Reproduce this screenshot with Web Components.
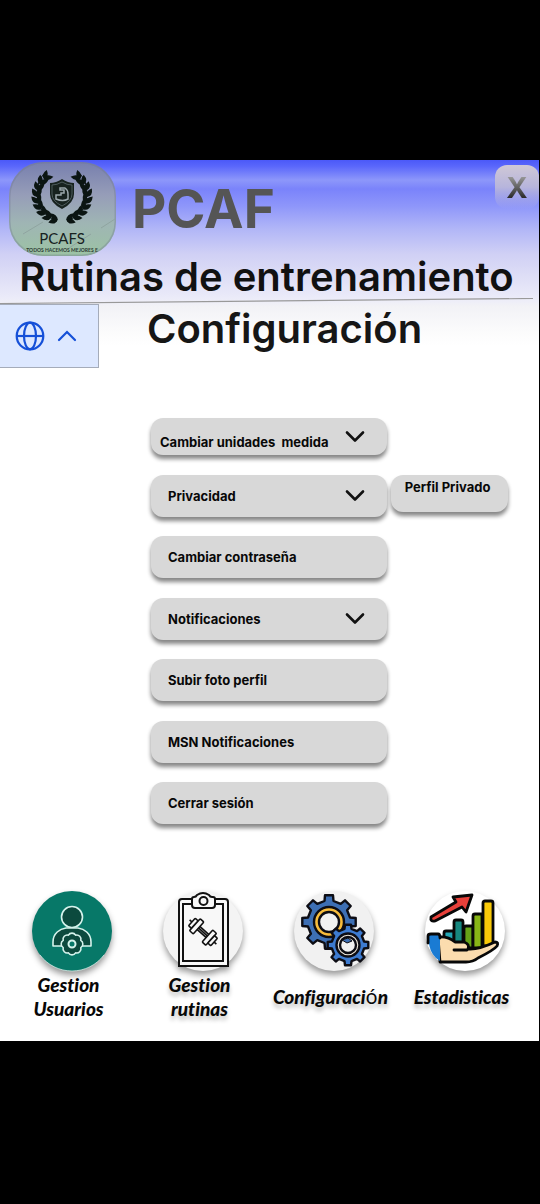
<!DOCTYPE html>
<html lang="es">
<head>
<meta charset="utf-8">
<meta name="viewport" content="width=device-width, initial-scale=1">
<title>PCAF - Configuración</title>
<style>
  body { margin: 0; background: #000; font-family: Inter, "Liberation Sans", sans-serif; }
</style>
</head>
<body>
<pcaf-screen>
  <pcaf-header slot="header">PCAF</pcaf-header>
  <settings-menu>
    <settings-row chevron compact>Cambiar unidades&nbsp; medida</settings-row>
    <settings-row chevron>Privacidad<span slot="option">Perfil Privado</span></settings-row>
    <settings-row>Cambiar contraseña</settings-row>
    <settings-row chevron>Notificaciones</settings-row>
    <settings-row>Subir foto perfil</settings-row>
    <settings-row>MSN Notificaciones</settings-row>
    <settings-row>Cerrar sesión</settings-row>
  </settings-menu>
  <bottom-nav slot="nav">
    <nav-item icon="users" flat>Gestion Usuarios</nav-item>
    <nav-item icon="clipboard">Gestion rutinas</nav-item>
    <nav-item icon="gears">Configuraci<span style="font:400 20px/20px 'Noto Sans',sans-serif">ó</span>n</nav-item>
    <nav-item icon="stats">Estadisticas</nav-item>
  </bottom-nav>
</pcaf-screen>

<script>
const define = (name, html) => customElements.define(name, class extends HTMLElement {
  constructor() {
    super();
    const t = document.createElement('template');
    t.innerHTML = typeof html === 'function' ? html(this) : html;
    this.attachShadow({ mode: 'open' }).append(t.content.cloneNode(true));
  }
});

/* Cog outline: teeth are trapezoids between the root radius r and the tip radius R. */
function cog(cx, cy, R, r, n, turn = 0) {
  const pts = [];
  for (let i = 0; i < n; i++) {
    for (const [f, rad] of [[-.27, r], [-.19, R], [.19, R], [.27, r]]) {
      const a = (i + f) * 2 * Math.PI / n + turn;
      pts.push((cx + rad * Math.cos(a)).toFixed(1) + ' ' + (cy + rad * Math.sin(a)).toFixed(1));
    }
  }
  return 'M' + pts.join('L') + 'Z';
}

/* Flower-like outline with n rounded lobes. */
function scallop(cx, cy, r, n) {
  let d = '';
  for (let i = 0; i <= n; i++) {
    const a = (i + .5) * 2 * Math.PI / n;
    const p = (cx + r * Math.cos(a)).toFixed(1) + ' ' + (cy + r * Math.sin(a)).toFixed(1);
    d += i ? `A4.2 4.2 0 0 1 ${p}` : 'M' + p;
  }
  return d + 'Z';
}

/* Half of a laurel wreath, with pairs of leaves along an arc. */
function laurel() {
  let s = '<path d="M48 59Q28 52 28 32Q28 18 36 11" fill="none" stroke="#0b1512" stroke-width="1"/>';
  for (let i = 0; i < 9; i++) {
    const a = 102 + i * 15.5, rad = a * Math.PI / 180;
    const x = 53 + 25 * Math.cos(rad), y = 34 + 24 * Math.sin(rad);
    for (const d of [58, 122]) {
      s += `<path transform="translate(${x.toFixed(1)} ${y.toFixed(1)}) rotate(${(a + d).toFixed(1)})" d="M-1 0Q3 -5.500 9 0Q3 4.500 -1 0Z"/>`;
    }
  }
  return s;
}

const ICONS = {
  users: `
    <circle cx="40" cy="40" r="40" fill="#077868"/>
    <path d="M8 64a40 40 0 0 0 64 0" fill="none" stroke="#d5f3ec" stroke-opacity=".7" stroke-width="1"/>
    <g transform="translate(0 1)" fill="#0c4a3e" stroke="#d5f3ec" stroke-width="1.600" stroke-linejoin="round">
      <circle cx="40" cy="25" r="10.500"/>
      <path d="M21 54v-4c0-9 7-13 13-14h12c6 1 13 5 13 14v4z"/>
      <path d="${scallop(40, 52, 9.5, 8)}"/>
      <circle cx="40" cy="52" r="3.500" fill="#077868" stroke-width="2"/>
    </g>`,
  clipboard: `
    <circle cx="40" cy="40" r="40" fill="#f4f4f4"/>
    <g transform="translate(0 1)" fill="#f8f8f8" stroke="#111" stroke-width="2">
      <path d="M16 74V10q0-3 3-3h43q3 0 3 3v64z"/>
      <path d="M20 69V12h40v57z"/>
      <path d="M31 5q2 0 3-2q6-4 12 0q1 2 3 2h1q2 0 2 2v6q0 3-3 3H32q-3 0-3-3V7q0-2 2-2z"/>
      <circle cx="40.500" cy="9" r="4"/>
      <g transform="translate(40 40) rotate(42)" stroke-width="1.600">
        <path d="M-18 0h36M-8-2H8V2H-8z"/>
        <rect x="-15" y="-5" width="4" height="10" rx="1"/>
        <rect x="-11" y="-8" width="5" height="16" rx="1"/>
        <rect x="6" y="-8" width="5" height="16" rx="1"/>
        <rect x="11" y="-5" width="4" height="10" rx="1"/>
      </g>
    </g>`,
  gears: `
    <circle cx="40" cy="40" r="40" fill="#f1f1f1"/>
    <g transform="translate(0 1)" stroke="#0d0d14" stroke-width="2.400" stroke-linejoin="round">
      <path fill="#3d6fb4" d="${cog(35, 30, 27, 21.5, 8)}"/>
      <circle cx="35" cy="30" r="15" fill="#f8bd3c"/>
      <circle cx="35" cy="30" r="10" fill="#f1f1f1"/>
      <path fill="#3d7bd0" d="${cog(54, 53, 20.5, 16.5, 8)}"/>
      <circle cx="54" cy="53" r="11.500" fill="#efe8dc"/>
      <circle cx="54" cy="53" r="8" fill="#f1f1f1"/>
      <path fill="#3d6fb4" stroke-width="1" d="M48 48l6-2 4 3-5 2z"/>
    </g>`,
  stats: `
    <circle cx="40" cy="40" r="40" fill="#fff"/>
    <g transform="translate(0 3)" stroke="#080808" stroke-width="2.800" stroke-linejoin="round" stroke-linecap="round">
      <path fill="#e8403a" d="M6 23L31 8l-3-5 19-2-6 17-4-5L10 27q-5 1-4-4z"/>
      <path fill="#24a7b5" d="M19 50V39q0-2 2-2h8v13z"/>
      <path fill="#16877f" d="M29 50V28q0-2 2-2h5q2 0 2 2v22z"/>
      <path fill="#66a318" d="M39 54V34q0-2 2-2h7v22z"/>
      <path fill="#87b516" d="M48 54V22q0-2 2-2h7v34z"/>
      <path fill="#f9c908" d="M58 52V9q0-2 2-2h6q2 0 2 2v43z"/>
      <path fill="#fbdcae" d="M13 43q10-1 17 5h9q6 2 4 7q10 1 27-7q4 0 2 4q-3 4-19 12q-5 4-12 4H15z"/>
      <path fill="none" d="M29 56h13"/>
      <path fill="#1a7bd3" stroke="none" d="M4 40h9q2 0 2 4v23Q6 62 4 50z"/>
      <path fill="none" d="M3 49v-7q0-2 3-2h7q2 0 2 4"/>
    </g>`
};

define('pcaf-screen', `
  <style>
    :host { display: block; padding: 160px 1px 163px 0; }
    .page {
      padding-bottom: 19px;
      background: #fff linear-gradient(#4b59f8 0, #5966fb 6px, #8d97fa 20px, #7a83fb 29px,
        #8e96fa 46px, #b0b5f7 68px, #d0d0f5 94px, #dedef6 116px, #ebebf9 138px,
        #f2f2f6 146px, #fafafb 168px, #fff 186px);
    }
    h1, h2 { margin: 0; font-size: 40px; font-weight: 600; line-height: 42px; color: #111; white-space: nowrap; }
    h1 { text-align: center; padding-right: 6px; }
    .rule { display: block; width: 100%; height: 6px; }
    .sub { display: flex; gap: 48px; align-items: flex-start; }
    h2 { padding-top: 4px; color: #161616; }
    main { margin-top: 50px; }
  </style>
  <div class="page">
    <slot name="header"></slot>
    <h1>Rutinas de entrenamiento</h1>
    <svg class="rule" viewBox="0 0 539 6" preserveAspectRatio="none"><path d="M0 5.500L533 .5" stroke="#999" stroke-width="1.200"/></svg>
    <div class="sub"><language-picker></language-picker><h2>Configuración</h2></div>
    <main><slot></slot></main>
    <slot name="nav"></slot>
  </div>`);

define('pcaf-header', () => `
  <style>
    :host { display: flex; align-items: center; padding: 2px 0 0 9px; gap: 16px; }
    .logo { display: block; width: 107px; height: 94px; }
    .name { font-size: 53px; line-height: 60px; font-weight: 700; color: #555; }
    button {
      margin: 3px 0 0 auto; align-self: flex-start; width: 44px; height: 44px; padding: 0; border: 0; border-radius: 12px;
      background: linear-gradient(#cfc8d6, #b7b5dc 50%, #a3a7f400);
      font: 700 29px/46px Inter, sans-serif;
    }
    button span { display: block; background: linear-gradient(#999 25%, #222 75%); -webkit-background-clip: text; background-clip: text; color: transparent; }
  </style>
  <svg class="logo" viewBox="0 0 107 94" role="img" aria-label="PCAFS">
    <defs>
      <linearGradient id="g" x2="0" y2="1"><stop stop-color="#777fae"/><stop offset=".35" stop-color="#969db8"/><stop offset=".65" stop-color="#9fb5b4"/><stop offset="1" stop-color="#9cc3a4"/></linearGradient>
      <clipPath id="c"><rect width="107" height="94" rx="34"/></clipPath>
    </defs>
    <g clip-path="url(#c)">
      <rect width="107" height="94" fill="url(#g)"/>
      <rect x=".5" y=".5" width="106" height="93" rx="34" fill="none" stroke="#6d7590" stroke-opacity=".35" stroke-width="2"/>
      <path d="M14 72l20-12M60 86l22-14M92 66l14-9" stroke="#8fa4a0" stroke-width="1"/>
      <g fill="#0b1512">${laurel()}<g transform="translate(106 0) scale(-1 1)">${laurel()}</g></g>
      <path d="M53 17q6 4 12 4v11q0 9-12 15q-12-6-12-15V21q6 0 12-4z" fill="#17221f"/>
      <path d="M53 20q5 3 10 3v9q0 7-10 12q-10-5-10-12v-9q5 0 10-3z" fill="none" stroke="#5c6a6c" stroke-width=".8"/>
      <path d="M51 26h5q3 2 3 6v5q-5 3-12 0v-4h5v-2h3v-3h-4z" fill="none" stroke="#9ba7ac" stroke-width="1.500"/>
      <text x="53" y="82" text-anchor="middle" font-family="Lato, sans-serif" font-size="15" fill="#17221f">PCAFS</text>
      <text x="53" y="90" text-anchor="middle" font-family="Lato, sans-serif" font-weight="700" font-size="5" fill="#2c3b34">TODOS HACEMOS MEJORES E</text>
    </g>
  </svg>
  <div class="name"><slot></slot></div>
  <button type="button" aria-label="Cerrar"><span>X</span></button>`);

define('language-picker', `
  <style>
    :host { display: block; }
    button {
      display: flex; align-items: center; gap: 11px; box-sizing: border-box; width: 99px; height: 64px; padding: 0 0 0 14px;
      background: #dde8ff; border: 1px solid #a5acba; border-left: 0;
    }
  </style>
  <button type="button" aria-label="Idioma">
    <svg width="32" height="32" viewBox="0 0 32 32" fill="none" stroke="#1550d8" stroke-width="2.200"><circle cx="16" cy="16" r="13.300"/><ellipse cx="16" cy="16" rx="6" ry="13.300"/><path d="M3 16h26"/></svg>
    <svg width="20" height="14" viewBox="0 0 20 14" fill="none" stroke="#1550d8" stroke-width="2.200" stroke-linecap="round"><path d="M2 11l8-8 8 8"/></svg>
  </button>`);

define('settings-menu', `
  <style>
    :host { display: flex; flex-direction: column; justify-content: space-between; min-height: 406px; }
  </style>
  <slot></slot>`);

define('settings-row', el => `
  <style>
    :host { display: grid; grid-template-columns: 151fr 236fr 152fr; align-items: start; }
    button, .option { border: 0; border-radius: 12px; background: #d8d8d8; font: 700 13px/16px Inter, sans-serif; color: #080808; box-shadow: 0 4px 4px #0000007a; }
    button { grid-column: 2; display: flex; justify-content: space-between; align-items: center; height: 42px; padding: 0 22px 0 17px; white-space: nowrap; }
    :host([compact]) button { height: 37px; padding-left: 9px; }
    :host([compact]) .text { padding-top: 10px; }
    .option { display: none; margin-left: 4px; width: 117px; height: 37px; box-sizing: border-box; padding: 4px 4px 0 0; text-align: center; }
    .option.on { display: block; }
  </style>
  <button type="button"><span class="text"><slot></slot></span>${el.hasAttribute('chevron') ?
    '<svg width="20" height="14" viewBox="0 0 20 14" fill="none" stroke="#111" stroke-width="2.600" stroke-linecap="round" stroke-linejoin="round"><path d="M2 2.500l8 8 8-8"/></svg>' : ''}</button>
  <div class="option ${el.querySelector('[slot=option]') ? 'on' : ''}"><slot name="option"></slot></div>`);

define('bottom-nav', `
  <style>
    :host { display: block; margin-top: 67px; }
    nav { display: grid; grid-template-columns: repeat(4, 1fr); padding: 0 9px 0 6px; }
  </style>
  <nav><slot></slot></nav>`);

define('nav-item', el => `
  <style>
    :host { display: block; }
    a { display: flex; flex-direction: column; align-items: center; gap: 1px; color: #080808; text-decoration: none; }
    .icon { display: block; width: 80px; height: 80px; overflow: visible; filter: drop-shadow(0 4px 3px #00000066); }
    .label { display: flex; align-items: center; min-height: 50px; margin-right: 6px; text-align: center; font: italic 900 19px/24px Lato, sans-serif; font-variant-ligatures: none; text-shadow: 0 4px 4px #00000040; }
    .label span { max-width: 86px; }
    :host([icon=gears]) .label span, :host([icon=stats]) .label span { max-width: none; }
    :host([flat]) .label { text-shadow: none; }
  </style>
  <a href="#${el.getAttribute('icon')}">
    <svg class="icon" viewBox="0 0 80 80" aria-hidden="true">${ICONS[el.getAttribute('icon')]}</svg>
    <div class="label"><span><slot></slot></span></div>
  </a>`);
</script>
</body>
</html>
